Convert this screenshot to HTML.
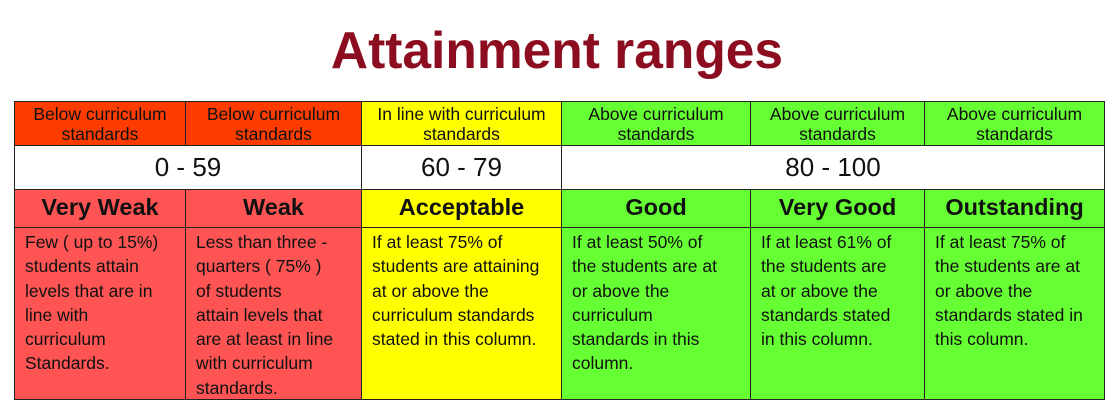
<!DOCTYPE html>
<html><head><meta charset="utf-8"><style>
body{margin:0;width:1114px;height:409px;background:#fff;position:relative;overflow:hidden;font-family:"Liberation Sans",sans-serif;}
.t{position:absolute;left:0;width:1114px;top:20px;text-align:center;font-weight:bold;font-size:51.5px;color:#8b0d1f;}
.c{position:absolute;box-sizing:border-box;border:1px solid #222;}
.h{font-size:17.5px;text-align:center;line-height:20px;padding-top:2px;color:#111;white-space:nowrap;}
.r{font-size:26px;text-align:center;line-height:42px;background:#fff;color:#111;}
.l{font-size:23.5px;font-weight:bold;text-align:center;line-height:34px;color:#111;}
.d{font-size:17.5px;line-height:24.3px;padding:2px 0 0 10px;white-space:nowrap;color:#111;}
.o{background:#ff3c00}.p{background:#ff5454}.y{background:#ffff00}.g{background:#66ff33}
</style></head><body>
<div class="t">Attainment ranges</div>
<div class="c h o" style="left:14px;top:101px;width:172px;height:45px">Below curriculum<br>standards</div>
<div class="c h o" style="left:185px;top:101px;width:177px;height:45px">Below curriculum<br>standards</div>
<div class="c h y" style="left:361px;top:101px;width:201px;height:45px">In line with curriculum<br>standards</div>
<div class="c h g" style="left:561px;top:101px;width:190px;height:45px">Above curriculum<br>standards</div>
<div class="c h g" style="left:750px;top:101px;width:175px;height:45px">Above curriculum<br>standards</div>
<div class="c h g" style="left:924px;top:101px;width:181px;height:45px">Above curriculum<br>standards</div>
<div class="c r" style="left:14px;top:145px;width:348px;height:45px">0 - 59</div>
<div class="c r" style="left:361px;top:145px;width:201px;height:45px">60 - 79</div>
<div class="c r" style="left:561px;top:145px;width:544px;height:45px">80 - 100</div>
<div class="c l p" style="left:14px;top:189px;width:172px;height:39px">Very Weak</div>
<div class="c l p" style="left:185px;top:189px;width:177px;height:39px">Weak</div>
<div class="c l y" style="left:361px;top:189px;width:201px;height:39px">Acceptable</div>
<div class="c l g" style="left:561px;top:189px;width:190px;height:39px">Good</div>
<div class="c l g" style="left:750px;top:189px;width:175px;height:39px">Very Good</div>
<div class="c l g" style="left:924px;top:189px;width:181px;height:39px">Outstanding</div>
<div class="c d p" style="left:14px;top:227px;width:172px;height:173px">Few ( up to 15%)<br>students attain<br>levels that are in<br>line with<br>curriculum<br>Standards.</div>
<div class="c d p" style="left:185px;top:227px;width:177px;height:173px">Less than three -<br>quarters ( 75% )<br>of students<br>attain levels that<br>are at least in line<br>with curriculum<br>standards.</div>
<div class="c d y" style="left:361px;top:227px;width:201px;height:173px">If at least 75% of<br>students are attaining<br>at or above the<br>curriculum standards<br>stated in this column.</div>
<div class="c d g" style="left:561px;top:227px;width:190px;height:173px">If at least 50% of<br>the students are at<br>or above the<br>curriculum<br>standards in this<br>column.</div>
<div class="c d g" style="left:750px;top:227px;width:175px;height:173px">If at least 61% of<br>the students are<br>at or above the<br>standards stated<br>in this column.</div>
<div class="c d g" style="left:924px;top:227px;width:181px;height:173px">If at least 75% of<br>the students are at<br>or above the<br>standards stated in<br>this column.</div>
</body></html>
